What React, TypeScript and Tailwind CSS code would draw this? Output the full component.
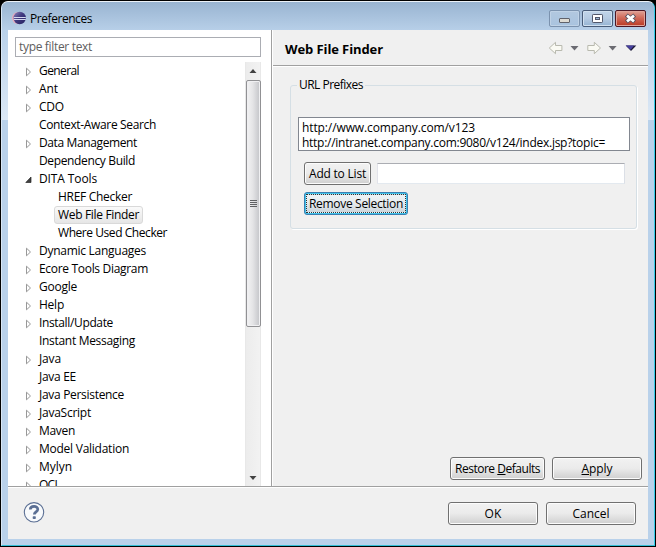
import { ReactNode, useLayoutEffect, useRef } from "react";

/** A text run whose letter spacing is tuned so that it fills a given width. */
function Fit({ w, children, className = "" }: { w: number; children: ReactNode; className?: string }) {
  const ref = useRef<HTMLSpanElement>(null);
  useLayoutEffect(() => {
    const el = ref.current;
    if (!el) return;
    el.style.letterSpacing = "0px";
    const natural = el.getBoundingClientRect().width;
    const count = Math.max(1, (el.textContent || "").length);
    el.style.letterSpacing = (w - natural) / count + "px";
  }, [w]);
  return (
    <span ref={ref} className={"inline-block whitespace-pre " + className}>
      {children}
    </span>
  );
}

type Item = { t: string; w: number; s?: "closed" | "open"; child?: boolean; sel?: boolean };

const items: Item[] = [
  { t: "General", w: 40, s: "closed" },
  { t: "Ant", w: 19, s: "closed" },
  { t: "CDO", w: 25, s: "closed" },
  { t: "Context-Aware Search", w: 117 },
  { t: "Data Management", w: 98, s: "closed" },
  { t: "Dependency Build", w: 96 },
  { t: "DITA Tools", w: 58, s: "open" },
  { t: "HREF Checker", w: 74, child: true },
  { t: "Web File Finder", w: 81, child: true, sel: true },
  { t: "Where Used Checker", w: 109, child: true },
  { t: "Dynamic Languages", w: 107, s: "closed" },
  { t: "Ecore Tools Diagram", w: 109, s: "closed" },
  { t: "Google", w: 38, s: "closed" },
  { t: "Help", w: 25, s: "closed" },
  { t: "Install/Update", w: 74, s: "closed" },
  { t: "Instant Messaging", w: 96 },
  { t: "Java", w: 22, s: "closed" },
  { t: "Java EE", w: 37 },
  { t: "Java Persistence", w: 85, s: "closed" },
  { t: "JavaScript", w: 52, s: "closed" },
  { t: "Maven", w: 36, s: "closed" },
  { t: "Model Validation", w: 90, s: "closed" },
  { t: "Mylyn", w: 33, s: "closed" },
  { t: "OCL", w: 21, s: "closed" },
];

function Twisty({ s }: { s?: "closed" | "open" }) {
  return (
    <svg className="h-[18px] w-[10px] shrink-0" viewBox="0 0 10 18">
      {s === "closed" && <path d="M1.5 6.2v7.6l4-3.8z" fill="#fff" stroke="#989898" />}
      {s === "open" && <path d="M6 7v5.5H.8z" fill="#404040" stroke="#262626" strokeWidth=".7" />}
    </svg>
  );
}

function Row({ item }: { item: Item }) {
  return (
    <div className="flex h-[18px] shrink-0 items-center pl-[10px]">
      <Twisty s={item.s} />
      <div
        className={
          "flex h-[18px] items-center rounded-[3px] border px-[3px] " +
          (item.child ? "ml-[19px] " : "") +
          (item.sel ? "border-[#d9d9d9] bg-linear-to-b from-[#fafafa] to-[#e6e6e6]" : "border-transparent")
        }
      >
        <Fit w={item.w}>{item.t}</Fit>
      </div>
    </div>
  );
}

function Button({ children, className, w }: { children: ReactNode; className: string; w: number }) {
  return (
    <button
      className={
        "flex h-[23px] items-center justify-center rounded-[3px] border border-[#707070] bg-linear-to-b from-[#f2f2f2] from-0% via-[#ebebeb] via-49% to-[#cfcfcf] shadow-[inset_0_0_0_1px_#fcfcfc] " +
        className
      }
    >
      <Fit w={w}>{children}</Fit>
    </button>
  );
}

function EclipseLogo() {
  return (
    <svg className="h-[14px] w-[14px]" viewBox="0 0 14 14">
      <defs>
        <linearGradient id="ball" x1="0" y1="0" x2="1" y2="1">
          <stop offset="0" stopColor="#8d86bd" />
          <stop offset=".45" stopColor="#413a80" />
          <stop offset="1" stopColor="#24215f" />
        </linearGradient>
      </defs>
      <circle cx="6.1" cy="7" r="6.1" fill="#e8a9ba" />
      <circle cx="7.7" cy="7" r="6.2" fill="url(#ball)" />
      <path d="M1.8 6.5h12M1.8 8.5h12" stroke="#d5d9f0" strokeWidth="1" />
    </svg>
  );
}

function WindowButtons() {
  return (
    <div className="mr-[8px] flex h-[30px] gap-[2px] pt-[10px]">
      <div className="flex h-[17px] w-[31px] items-center justify-center rounded-[2px] border border-[#7b92ae] bg-linear-to-b from-[#b2c8df] to-[#a9c3df] shadow-[inset_0_0_0_1px_#bfd2e6]">
        <svg className="h-[13px] w-[15px]" viewBox="0 0 15 13">
          <rect x="2.5" y="6.5" width="10" height="4" rx=".5" fill="#dedbd3" stroke="#60626b" />
        </svg>
      </div>
      <div className="flex h-[17px] w-[31px] items-center justify-center rounded-[2px] border border-[#485c78] bg-linear-to-b from-[#c1d5e9] from-0% via-[#b6cbe2] via-48% to-[#94b3d2] shadow-[inset_0_0_0_1px_#d0e0ef]">
        <svg className="h-[13px] w-[13px]" viewBox="0 0 13 13">
          <rect x="1.5" y="2.5" width="10" height="8" rx=".7" fill="#fff" stroke="#52586b" />
          <rect x="4.5" y="5.5" width="4" height="2" fill="#9cb7d5" stroke="#52586b" />
        </svg>
      </div>
      <div className="flex h-[17px] w-[31px] items-center justify-center rounded-[2px] border border-[#4c1724] bg-linear-to-b from-[#dfa195] from-0% via-[#cf6757] via-48% to-[#ba3720] shadow-[inset_0_0_0_1px_#e0a399]">
        <svg className="h-[13px] w-[13px]" viewBox="0 0 13 13">
          <path d="M2.3 3.1l8.4 6.8M10.7 3.1L2.3 9.9" stroke="#54505e" strokeWidth="4.4" />
          <path d="M3 3.6l7 5.8M10 3.6L3 9.4" stroke="#fff" strokeWidth="2.7" />
        </svg>
      </div>
    </div>
  );
}

function HeaderTools() {
  return (
    <svg className="h-[16px] w-[92px]" viewBox="0 0 92 16">
      <path d="M1.3 8L7.5 2.3v3.2h6.4v5H7.5v3.2z" fill="#fafaf3" stroke="#b8b9ae" />
      <path d="M22.5 6h8l-4 4.5z" fill="#6b6b72" />
      <path d="M52.5 8L46.3 2.3v3.2h-6.5v5h6.5v3.2z" fill="#fafaf3" stroke="#b8b9ae" />
      <path d="M60.6 6h8l-4 4.5z" fill="#6b6b72" />
      <path d="M77.7 5.5h10.6L83 11z" fill="#1c1a38" />
      <path d="M77.7 5.5h8.5l-3.6 4.2z" fill="#4740a0" />
    </svg>
  );
}

function Scrollbar() {
  return (
    <div className="flex h-[424px] w-4 shrink-0 flex-col items-center border-x border-[#e8e8e8] bg-linear-to-r from-[#ececec] to-[#f2f2f2]">
      <svg className="h-[18px] w-[14px] shrink-0" viewBox="0 0 14 18">
        <path d="M3.5 11h7L7 7z" fill="#424242" />
      </svg>
      <div className="flex h-[247px] w-[15px] shrink-0 flex-col items-center justify-center gap-px rounded-[2px] border border-[#919194] bg-linear-to-r from-[#f3f3f4] from-0% via-[#e4e4e6] via-45% to-[#c3c4c8] shadow-[inset_0_0_0_1px_#f0f0f2]">
        <div className="h-px w-[7px] bg-[#5f6063]" />
        <div className="h-px w-[7px] bg-[#5f6063]" />
        <div className="h-px w-[7px] bg-[#5f6063]" />
        <div className="h-px w-[7px] bg-[#5f6063]" />
      </div>
      <svg className="mt-auto h-[17px] w-[14px] shrink-0" viewBox="0 0 14 17">
        <path d="M3.5 7h7L7 11z" fill="#424242" />
      </svg>
    </div>
  );
}

export default function App() {
  return (
    <div className="flex h-[547px] w-[656px] overflow-hidden bg-black p-px font-['Open_Sans','Noto_Sans',sans-serif] text-[12px] leading-[16px] text-black">
      <div className="flex h-[545px] w-[654px] flex-col rounded-t-[7px] border border-t-[#ecf2f8] border-r-[#35cce8] border-b-[#35bfd6] border-l-[#d9e7f5] bg-[#b9d1ea]">
        <div className="flex h-[28px] shrink-0 items-start rounded-t-[6px] bg-linear-to-b from-[#99b4d1] to-[#b7cfe8] pl-[10px]">
          <div className="pt-[9px]">
            <EclipseLogo />
          </div>
          <div className="pt-[9px] pl-[4px]">
            <Fit w={62}>Preferences</Fit>
          </div>
          <div className="-mt-[2px] ml-auto">
            <WindowButtons />
          </div>
        </div>

        <div className="flex h-[509px] shrink-0">
          <div className="flex w-[6px] shrink-0 flex-col">
            <div className="h-[90px] bg-linear-to-b from-[#b9d1ea] to-[#dce8f5]" />
          </div>
          <div className="flex h-[509px] w-[640px] shrink-0 flex-col bg-[#f0f0f0]">
            <div className="flex h-[456px] shrink-0">
              <div className="flex w-[263px] shrink-0 flex-col bg-white">
                <div className="mt-[7px] ml-[7px] flex h-[20px] w-[246px] shrink-0 items-center border border-[#abadb3] pl-[3px] text-[#5e5e5e]">
                  <Fit w={73}>type filter text</Fit>
                </div>
                <div className="mt-[5px] flex h-[424px] overflow-hidden pl-[7px]">
                  <div className="flex h-[424px] w-[230px] shrink-0 flex-col overflow-hidden">
                    {items.map((item) => (
                      <Row key={item.t} item={item} />
                    ))}
                  </div>
                  <Scrollbar />
                </div>
              </div>
              <div className="w-px shrink-0 bg-[#a0a0a0]" />
              <div className="w-px shrink-0 bg-white" />
              <div className="flex w-[375px] shrink-0 flex-col">
                <div className="flex h-[37px] shrink-0 items-center border-b border-b-white pl-[12px] shadow-[inset_0_-1px_0_#a0a0a0]">
                  <Fit w={98} className="mt-[1px] text-[13px] font-bold">
                    Web File Finder
                  </Fit>
                  <div className="mr-[8px] -mt-px ml-auto h-[16px]">
                    <HeaderTools />
                  </div>
                </div>

                <fieldset className="mt-[9px] ml-[17px] h-[153px] w-[347px] shrink-0 rounded-[3px] border border-[#d5dfe5] shadow-[1px_1px_0_#fff]">
                  <legend className="ml-[6px] h-[18px] px-[2px] pt-px">
                    <Fit w={64}>URL Prefixes</Fit>
                  </legend>
                  <div className="mt-[23px] ml-[7px] h-[34px] w-[332px] border border-[#828790] bg-white pt-[2px] pl-[3px] leading-[15px]">
                    <Fit w={173} className="!block w-max">
                      http://www.company.com/v123
                    </Fit>
                    <Fit w={303} className="!block w-max">
                      http://intranet.company.com:9080/v124/index.jsp?topic=
                    </Fit>
                  </div>
                  <div className="mt-[11px] ml-[13px] flex items-center gap-[6px]">
                    <Button w={57} className="w-[67px]">
                      Add to List
                    </Button>
                    <div className="h-[21px] w-[248px] border border-t-[#abadb3] border-r-[#dbdfe6] border-b-[#e3e9ef] border-l-[#e2e3ea] bg-white" />
                  </div>
                  <button className="mt-[7px] ml-[13px] flex h-[23px] w-[104px] items-center justify-center rounded-[3px] border border-[#3c7fb1] bg-[#42c6ee] p-px">
                    <div className="flex h-[19px] w-[100px] items-center justify-center border border-dotted border-[#333] bg-linear-to-b from-[#eef3f6] from-0% via-[#e5eaed] via-49% to-[#cdd6dc]">
                      <Fit w={94}>Remove Selection</Fit>
                    </div>
                  </button>
                </fieldset>

                <div className="mt-auto mr-[6px] mb-[6px] flex justify-end gap-[7px]">
                  <Button w={85} className="w-[95px]">
                    Restore <u>D</u>efaults
                  </Button>
                  <Button w={31} className="w-[90px]">
                    <u>A</u>pply
                  </Button>
                </div>
              </div>
            </div>
            <div className="h-px shrink-0 bg-[#a0a0a0]" />
            <div className="h-px shrink-0 bg-white" />
            <div className="flex h-[51px] shrink-0 items-start pt-[14px] pr-[12px] pl-[15px]">
              <svg className="h-[22px] w-[22px]" viewBox="0 0 22 22">
                <circle cx="11" cy="10.3" r="9.7" fill="#f8fafc" stroke="#5b6f94" strokeWidth="1.1" />
                <path d="M7.3 7.6C7.3 3.3 14.8 3.4 14.8 7.2c0 2.7-3.5 2.7-3.5 5.4" fill="none" stroke="#5b6f94" strokeWidth="2.7" />
                <rect x="9.7" y="14.2" width="3.1" height="2.8" rx=".8" fill="#5b6f94" />
              </svg>
              <div className="ml-auto flex gap-[8px]">
                <Button w={17} className="w-[90px]">
                  OK
                </Button>
                <Button w={37} className="w-[90px]">
                  Cancel
                </Button>
              </div>
            </div>
          </div>
          <div className="flex w-[6px] shrink-0 flex-col">
            <div className="h-[90px] bg-linear-to-b from-[#b9d1ea] to-[#dce8f5]" />
          </div>
        </div>
      </div>
    </div>
  );
}
